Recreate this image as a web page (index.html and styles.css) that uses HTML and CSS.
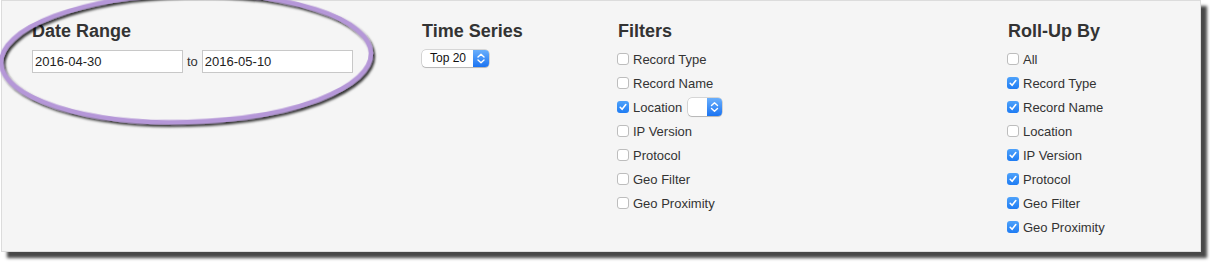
FILE: index.html
```html
<!DOCTYPE html>
<html>

<head>
    <title>Report Options</title>
    <link rel="stylesheet" href="styles.css">
</head>

<body>
    <div class="panel">
        <div class="options">
            <div class="col">
                <h2>Date Range</h2>
                <div class="date-range">
                    <input type="text" class="date-input" value="2016-04-30">
                    <span class="to">to</span>
                    <input type="text" class="date-input" value="2016-05-10">
                </div>
            </div>
            <div class="col">
                <h2>Time Series</h2>
                <div class="picker picker-top">
                    <span class="picker-text">Top 20</span>
                    <span class="stepper">
                        <svg width="16" height="17" viewBox="0 0 16 17">
                            <path d="M5 7 L8 4.2 L11 7 M5 10 L8 12.8 L11 10" fill="none" stroke="#fff" stroke-width="1.4" stroke-linecap="round" stroke-linejoin="round" />
                        </svg>
                    </span>
                </div>
            </div>
            <div class="col">
                <h2>Filters</h2>
                <ul class="checks">
                    <li><span class="box"></span>Record Type</li>
                    <li><span class="box"></span>Record Name</li>
                    <li><span class="box checked"><svg width="12" height="12" viewBox="0 0 12 12"><path d="M3.2 6.3 L5.1 8.3 L8.8 3.6" fill="none" stroke="#fff" stroke-width="1.6" stroke-linecap="round" stroke-linejoin="round" /></svg></span>Location
                        <div class="picker picker-small">
                            <span class="picker-text"></span>
                            <span class="stepper">
                                <svg width="15" height="18" viewBox="0 0 15 18">
                                    <path d="M4.5 7.5 L7.5 4.7 L10.5 7.5 M4.5 10.5 L7.5 13.3 L10.5 10.5" fill="none" stroke="#fff" stroke-width="1.4" stroke-linecap="round" stroke-linejoin="round" />
                                </svg>
                            </span>
                        </div>
                    </li>
                    <li><span class="box"></span>IP Version</li>
                    <li><span class="box"></span>Protocol</li>
                    <li><span class="box"></span>Geo Filter</li>
                    <li><span class="box"></span>Geo Proximity</li>
                </ul>
            </div>
            <div class="col">
                <h2>Roll-Up By</h2>
                <ul class="checks">
                    <li><span class="box"></span>All</li>
                    <li><span class="box checked"><svg width="12" height="12" viewBox="0 0 12 12"><path d="M3.2 6.3 L5.1 8.3 L8.8 3.6" fill="none" stroke="#fff" stroke-width="1.6" stroke-linecap="round" stroke-linejoin="round" /></svg></span>Record Type</li>
                    <li><span class="box checked"><svg width="12" height="12" viewBox="0 0 12 12"><path d="M3.2 6.3 L5.1 8.3 L8.8 3.6" fill="none" stroke="#fff" stroke-width="1.6" stroke-linecap="round" stroke-linejoin="round" /></svg></span>Record Name</li>
                    <li><span class="box"></span>Location</li>
                    <li><span class="box checked"><svg width="12" height="12" viewBox="0 0 12 12"><path d="M3.2 6.3 L5.1 8.3 L8.8 3.6" fill="none" stroke="#fff" stroke-width="1.6" stroke-linecap="round" stroke-linejoin="round" /></svg></span>IP Version</li>
                    <li><span class="box checked"><svg width="12" height="12" viewBox="0 0 12 12"><path d="M3.2 6.3 L5.1 8.3 L8.8 3.6" fill="none" stroke="#fff" stroke-width="1.6" stroke-linecap="round" stroke-linejoin="round" /></svg></span>Protocol</li>
                    <li><span class="box checked"><svg width="12" height="12" viewBox="0 0 12 12"><path d="M3.2 6.3 L5.1 8.3 L8.8 3.6" fill="none" stroke="#fff" stroke-width="1.6" stroke-linecap="round" stroke-linejoin="round" /></svg></span>Geo Filter</li>
                    <li><span class="box checked"><svg width="12" height="12" viewBox="0 0 12 12"><path d="M3.2 6.3 L5.1 8.3 L8.8 3.6" fill="none" stroke="#fff" stroke-width="1.6" stroke-linecap="round" stroke-linejoin="round" /></svg></span>Geo Proximity</li>
                </ul>
            </div>
        </div>
    </div>

    <!-- annotation circled round the date range -->
    <svg class="annotation" width="420" height="150" viewBox="0 0 420 150">
        <defs>
            <filter id="ring-shadow" x="-10%" y="-20%" width="120%" height="140%">
                <feDropShadow dx="2" dy="2.5" stdDeviation="1" flood-color="#000" flood-opacity="0.8" />
            </filter>
        </defs>
        <ellipse cx="186" cy="58" rx="185" ry="64" transform="rotate(-1.5 186 58)" fill="none" stroke="#b597d8" stroke-width="4.5" filter="url(#ring-shadow)" />
    </svg>
</body>

</html>
```

FILE: styles.css
```css
/* page */
body {
    margin: 0;
    min-height: 264px;
    position: relative;
    background: #fff;
    font-family: "Liberation Sans", Arial, sans-serif;
    color: #333;
}

/* the grey options panel */
.panel {
    margin-left: 1px;
    width: 1200px;
    height: 252px;
    box-sizing: border-box;
    padding: 20px 0 0 30px;
    background: #f5f5f5;
    border: 1px solid #dcdcdc;
    box-shadow: 6px 6px 3px rgba(0, 0, 0, 0.72);
}

.options {
    display: grid;
    grid-template-columns: 390px 196px 390px 1fr;
}

h2 {
    margin: 0;
    font-size: 18px;
    line-height: 20px;
    font-weight: bold;
    color: #333;
}

/* date range inputs */
.date-range {
    display: flex;
    align-items: center;
    margin-top: 9px;
}

.date-input {
    width: 151px;
    height: 23px;
    box-sizing: border-box;
    margin: 0;
    padding: 0 2px;
    border: 1px solid #c8c8c8;
    background: #fff;
    font-family: "Liberation Sans", Arial, sans-serif;
    font-size: 13px;
    color: #222;
    outline: none;
}

.to {
    font-size: 13px;
    margin: 0 4px 0 4px;
    color: #333;
}

/* mac style pop-up buttons */
.picker {
    display: inline-flex;
    box-sizing: border-box;
    border-radius: 4px;
    background: #fff;
    box-shadow: 0 0 0 0.5px rgba(0, 0, 0, 0.25), 0 1px 1px rgba(0, 0, 0, 0.15);
    overflow: hidden;
    vertical-align: middle;
}

.picker-top {
    margin-top: 9px;
    width: 67px;
    height: 17px;
}

.picker-small {
    width: 34px;
    height: 18px;
    margin-left: 6px;
}

.picker-text {
    flex: 1;
    font-size: 12px;
    line-height: 17px;
    padding-left: 8px;
    color: #111;
}

.stepper {
    display: flex;
    background: linear-gradient(#6aaffc, #1b74f2);
}

/* checkbox lists */
.checks {
    list-style: none;
    margin: 6px 0 0 0;
    padding: 0;
}

.checks li {
    display: flex;
    align-items: center;
    height: 24px;
    font-size: 13px;
    margin-left: -1px;
}

.box {
    display: flex;
    width: 12px;
    height: 12px;
    box-sizing: border-box;
    margin-right: 4px;
    border: 1px solid #bdbdbd;
    border-radius: 3px;
    background: #fff;
}

.box.checked {
    border: none;
    background: linear-gradient(#4ea2fb, #1f7cf3);
}

/* purple ring drawn over the panel */
.annotation {
    position: absolute;
    left: 0;
    top: 0;
    overflow: visible;
    pointer-events: none;
}
```
